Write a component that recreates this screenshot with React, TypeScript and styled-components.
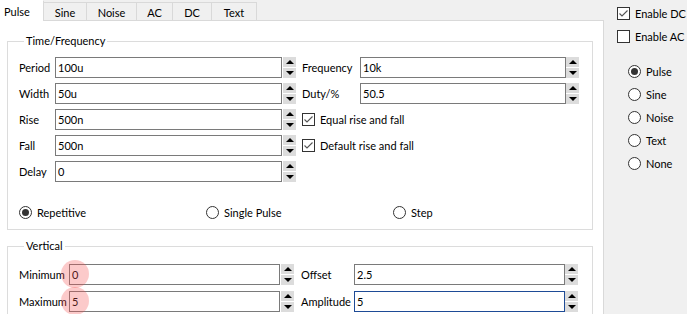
import React from "react";
import styled, { createGlobalStyle, css } from "styled-components";

const FONT = `"Lato", "Open Sans", "Liberation Sans", sans-serif`;

const Global = createGlobalStyle`
  html, body { margin: 0; padding: 0; background: #f0f0f0; }
  body { font-family: ${FONT}; font-size: 11px; color: #000; }
  * { box-sizing: border-box; }
`;

const Root = styled.div`
  display: flex;
  align-items: flex-start;
  width: 687px;
  height: 314px;
  overflow: hidden;
`;

const TabWidget = styled.div`
  width: 604px;
  flex: none;
  display: flex;
  flex-direction: column;
`;

const TabBar = styled.div`
  display: flex;
  align-items: flex-end;
  height: 20px;
  position: relative;
  z-index: 1;
`;

const Tab = styled.div<{ $active?: boolean; $w: number }>`
  width: ${(p) => p.$w}px;
  height: ${(p) => (p.$active ? 21 : 18)}px;
  margin-bottom: ${(p) => (p.$active ? -1 : 0)}px;
  display: flex;
  align-items: center;
  justify-content: center;
  padding-top: ${(p) => (p.$active ? 0 : 1)}px;
  padding-right: ${(p) => (p.$active ? 9 : 0)}px;
  background: ${(p) => (p.$active ? "#ffffff" : "#f0f0f0")};
  border-top: 1px solid #d9d9d9;
  border-right: 1px solid #d9d9d9;
  ${(p) => p.$active && css`border-top-color: #ffffff;`}
`;

const TabPanel = styled.div`
  height: 294px;
  background: #ffffff;
  border-top: 1px solid #d9d9d9;
  border-right: 1px solid #d9d9d9;
  padding: 13px 10px 0 7px;
  display: flex;
  flex-direction: column;
`;

const Group = styled.fieldset<{ $pt: number; $pb: number; $mt: number }>`
  margin: ${(p) => p.$mt}px 0 0 0;
  min-width: 0;
  border: 1px solid #dcdcdc;
  padding: ${(p) => p.$pt}px 11px ${(p) => p.$pb}px 11px;
`;

const Legend = styled.legend`
  margin-left: 5px;
  padding: 0 2px;
  line-height: 14px;
`;

const FieldGrid = styled.div<{ $cols: string; $gap: number }>`
  display: grid;
  grid-template-columns: ${(p) => p.$cols};
  grid-auto-rows: 21px;
  row-gap: ${(p) => p.$gap}px;
  align-items: center;
`;

const Label = styled.span`
  white-space: nowrap;
`;

const Cell = styled.div`
  position: relative;
  height: 21px;
`;

const Input = styled.div<{ $focused?: boolean }>`
  height: 21px;
  border: 1px solid ${(p) => (p.$focused ? "#1e4b96" : "#7a7a7a")};
  background: #ffffff;
  padding: 0 2px;
  display: flex;
  align-items: center;
  white-space: nowrap;
`;

const Marker = styled.span`
  position: absolute;
  left: -8px;
  top: -4px;
  width: 28px;
  height: 28px;
  border-radius: 50%;
  background: rgba(245, 80, 80, 0.3);
  pointer-events: none;
`;

const Spin = styled.div<{ $offset?: number }>`
  display: flex;
  flex-direction: column;
  gap: 1px;
  width: 13px;
  margin-left: ${(p) => p.$offset ?? 1}px;
  align-self: start;
`;

const SpinBtn = styled.div<{ $down?: boolean }>`
  height: 10px;
  background: #dcdcdc;
  display: flex;
  align-items: center;
  justify-content: center;
  &::after {
    content: "";
    width: 0;
    height: 0;
    border-left: 4px solid transparent;
    border-right: 4px solid transparent;
    ${(p) =>
      p.$down
        ? css`border-top: 4px solid #000;`
        : css`border-bottom: 4px solid #000;`}
  }
`;

const CheckRow = styled.label<{ $span?: number }>`
  display: flex;
  align-items: center;
  gap: 5px;
  white-space: nowrap;
  ${(p) => p.$span && css`grid-column: span ${p.$span};`}
`;

const Box = styled.span`
  width: 13px;
  height: 13px;
  border: 1px solid #333333;
  background: #ffffff;
  flex: none;
  display: flex;
`;

const RadioRow = styled.label`
  display: flex;
  align-items: center;
  gap: 5px;
  white-space: nowrap;
`;

const RadioCircle = styled.span<{ $checked?: boolean }>`
  width: 13px;
  height: 13px;
  border-radius: 50%;
  border: 1px solid #333333;
  background: #ffffff;
  flex: none;
  display: flex;
  align-items: center;
  justify-content: center;
  &::after {
    content: "";
    width: 7px;
    height: 7px;
    border-radius: 50%;
    background: ${(p) => (p.$checked ? "#333333" : "transparent")};
  }
`;

const ModeRow = styled.div`
  display: grid;
  grid-template-columns: repeat(3, 187px);
  margin-top: 22px;
  height: 16px;
  align-items: center;
`;

const Side = styled.div`
  flex: 1;
  display: flex;
  flex-direction: column;
  padding: 7px 0 0 13px;
`;

const SideChecks = styled.div`
  display: flex;
  flex-direction: column;
  gap: 10px;
`;

const SideRadios = styled.div`
  display: flex;
  flex-direction: column;
  gap: 10px;
  margin-top: 22px;
  padding-left: 11px;
`;

const Check: React.FC<{ checked?: boolean; label: string; span?: number }> = ({
  checked,
  label,
  span,
}) => (
  <CheckRow $span={span}>
    <Box>
      {checked && (
        <svg width="11" height="11" viewBox="0 0 11 11">
          <polyline points="1.5,5.5 4,8 9.5,2.5" fill="none" stroke="#555" strokeWidth="1.1" />
        </svg>
      )}
    </Box>
    {label}
  </CheckRow>
);

const Radio: React.FC<{ checked?: boolean; label: string }> = ({ checked, label }) => (
  <RadioRow>
    <RadioCircle $checked={checked} />
    {label}
  </RadioRow>
);

const SpinButtons: React.FC<{ offset?: number }> = ({ offset }) => (
  <Spin $offset={offset}>
    <SpinBtn />
    <SpinBtn $down />
  </Spin>
);

const Field: React.FC<{ value: string; marker?: boolean; focused?: boolean }> = ({
  value,
  marker,
  focused,
}) => (
  <Cell>
    <Input $focused={focused}>{value}</Input>
    {marker && <Marker />}
  </Cell>
);

const tabs = [
  { name: "Pulse", w: 44 },
  { name: "Sine", w: 43 },
  { name: "Noise", w: 50 },
  { name: "AC", w: 36 },
  { name: "DC", w: 39 },
  { name: "Text", w: 45 },
];

export default function App() {
  return (
    <>
      <Global />
      <Root>
        <TabWidget>
          <TabBar>
            {tabs.map((t, i) => (
              <Tab key={t.name} $w={t.w} $active={i === 0}>
                {t.name}
              </Tab>
            ))}
          </TabBar>
          <TabPanel>
            <Group $pt={9} $pb={9} $mt={0}>
              <Legend>Time/Frequency</Legend>
              <FieldGrid $cols="36px 227px 20px 58px 206px 14px" $gap={5}>
                <Label>Period</Label>
                <Field value="100u" />
                <SpinButtons />
                <Label>Frequency</Label>
                <Field value="10k" />
                <SpinButtons offset={0} />

                <Label>Width</Label>
                <Field value="50u" />
                <SpinButtons />
                <Label>Duty/%</Label>
                <Field value="50.5" />
                <SpinButtons offset={0} />

                <Label>Rise</Label>
                <Field value="500n" />
                <SpinButtons />
                <Check checked label="Equal rise and fall" span={3} />

                <Label>Fall</Label>
                <Field value="500n" />
                <SpinButtons />
                <Check checked label="Default rise and fall" span={3} />

                <Label>Delay</Label>
                <Field value="0" />
                <SpinButtons />
              </FieldGrid>
              <ModeRow>
                <Radio checked label="Repetitive" />
                <Radio label="Single Pulse" />
                <Radio label="Step" />
              </ModeRow>
            </Group>
            <Group $pt={11} $pb={9} $mt={9}>
              <Legend>Vertical</Legend>
              <FieldGrid $cols="50px 211px 21px 53px 211px 14px" $gap={6}>
                <Label>Minimum</Label>
                <Field value="0" marker />
                <SpinButtons />
                <Label>Offset</Label>
                <Field value="2.5" />
                <SpinButtons offset={0} />

                <Label>Maximum</Label>
                <Field value="5" marker />
                <SpinButtons />
                <Label>Amplitude</Label>
                <Field value="5" focused />
                <SpinButtons offset={0} />
              </FieldGrid>
            </Group>
          </TabPanel>
        </TabWidget>
        <Side>
          <SideChecks>
            <Check checked label="Enable DC" />
            <Check label="Enable AC" />
          </SideChecks>
          <SideRadios>
            <Radio checked label="Pulse" />
            <Radio label="Sine" />
            <Radio label="Noise" />
            <Radio label="Text" />
            <Radio label="None" />
          </SideRadios>
        </Side>
      </Root>
    </>
  );
}
